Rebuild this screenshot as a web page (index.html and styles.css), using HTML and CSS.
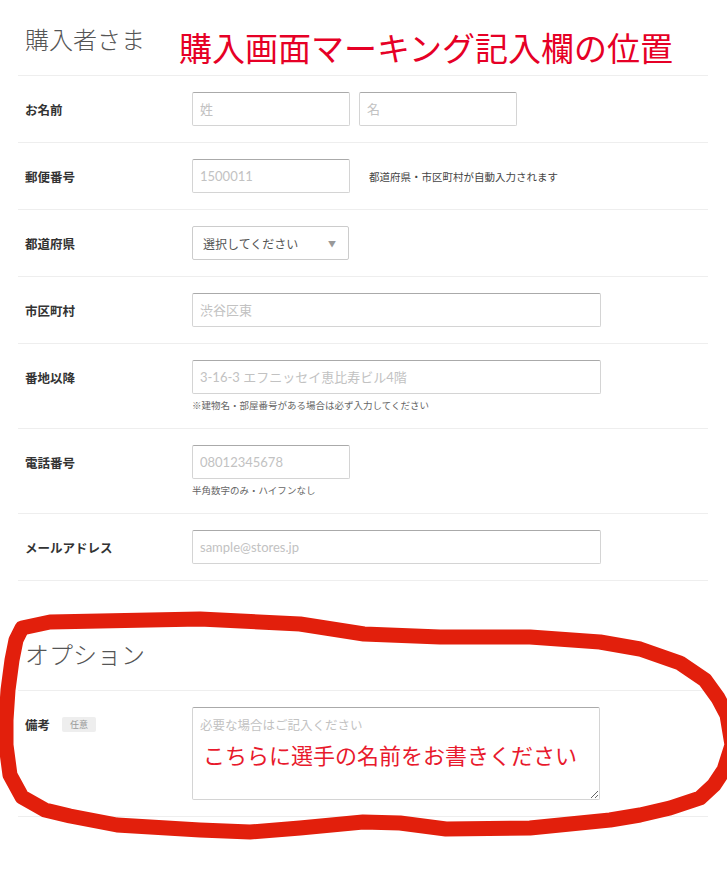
FILE: index.html
```html
<!DOCTYPE html>
<html lang="ja">
<head>
    <meta charset="UTF-8">
    <meta name="viewport" content="width=device-width, initial-scale=1.0">
    <title>購入者さま</title>
    <link rel="stylesheet" href="styles.css">
</head>
<body>
    <div class="form">
        <!-- 購入者情報 -->
        <section class="section">
            <div class="section-head">
                <h2>購入者さま</h2>
                <span class="mark-title">購入画面マーキング記入欄の位置</span>
            </div>

            <div class="row">
                <label class="label">お名前</label>
                <div class="field">
                    <div class="inline">
                        <input class="input short" type="text" placeholder="姓">
                        <input class="input short" type="text" placeholder="名">
                    </div>
                </div>
            </div>

            <div class="row">
                <label class="label">郵便番号</label>
                <div class="field">
                    <div class="inline">
                        <input class="input short" type="text" placeholder="1500011">
                        <span class="hint">都道府県・市区町村が自動入力されます</span>
                    </div>
                </div>
            </div>

            <div class="row">
                <label class="label">都道府県</label>
                <div class="field">
                    <div class="select">
                        <span>選択してください</span>
                        <span class="arrow">▼</span>
                    </div>
                </div>
            </div>

            <div class="row">
                <label class="label">市区町村</label>
                <div class="field">
                    <input class="input wide" type="text" placeholder="渋谷区東">
                </div>
            </div>

            <div class="row">
                <label class="label">番地以降</label>
                <div class="field">
                    <input class="input wide" type="text" placeholder="3-16-3 エフニッセイ恵比寿ビル4階">
                    <p class="note">※建物名・部屋番号がある場合は必ず入力してください</p>
                </div>
            </div>

            <div class="row">
                <label class="label">電話番号</label>
                <div class="field">
                    <input class="input short" type="text" placeholder="08012345678">
                    <p class="note">半角数字のみ・ハイフンなし</p>
                </div>
            </div>

            <div class="row">
                <label class="label">メールアドレス</label>
                <div class="field">
                    <input class="input wide" type="text" placeholder="sample@stores.jp">
                </div>
            </div>
        </section>

        <!-- オプション -->
        <section class="section option">
            <div class="section-head">
                <h2>オプション</h2>
            </div>

            <div class="row">
                <label class="label">備考<span class="badge">任意</span></label>
                <div class="field">
                    <div class="memo">
                        <textarea class="textarea" placeholder="必要な場合はご記入ください"></textarea>
                        <span class="memo-mark">こちらに選手の名前をお書きください</span>
                    </div>
                </div>
            </div>
        </section>
    </div>

    <!-- 手書きの赤丸 -->
    <svg class="circle" width="727" height="873" viewBox="0 0 727 873">
        <path d="M22 628 L50 622 L100 621 L200 619 L300 624 L364 634 L440 637 L530 637 L600 642 L640 649 L680 663 L705 680 L718 698 L727 715 L732 745 L724 770 L714 785 L700 798 L670 808 L640 815 L610 820 L530 828 L446 829 L400 823 L363 822 L300 828 L250 832 L200 830 L117 825 L70 816 L45 810 L22 797 L10 775 L6 745 L6 720 L8 690 L12 660 L16 640 Z"
              fill="none" stroke="#e21f0c" stroke-width="15" stroke-linejoin="round"/>
    </svg>
</body>
</html>
```

FILE: styles.css
```css
html, body {
    margin: 0;
    padding: 0;
    background: #fff;
    overflow: hidden;
}
body {
    position: relative;
    min-height: 873px;
    font-family: "Lato", "Noto Sans CJK JP", sans-serif;
    color: #333;
}
.form {
    width: 690px;
    margin-left: 18px;
}
.option {
    margin-top: 34px;
}
.section-head {
    display: flex;
    align-items: flex-start;
    box-sizing: border-box;
    height: 76px;
    padding: 22px 0 0 7px;
    border-bottom: 1px solid #eee;
}
.section-head h2 {
    margin: 0;
    font-size: 24px;
    line-height: 36px;
    font-weight: 300;
    color: #555;
}
.mark-title {
    margin: 8px 0 0 34px;
    font-size: 33px;
    line-height: 36px;
    color: #e60026;
    white-space: nowrap;
}
.row {
    display: grid;
    grid-template-columns: 167px 1fr;
    padding: 16px 0 16px 7px;
    border-bottom: 1px solid #eee;
}
.label {
    display: flex;
    align-items: center;
    align-self: start;
    height: 34px;
    font-size: 12.5px;
    font-weight: bold;
    color: #333;
}
.badge {
    margin-left: 12px;
    padding: 0 8px;
    height: 15px;
    line-height: 15px;
    font-size: 9px;
    font-weight: normal;
    color: #999;
    background: #eee;
    border-radius: 2px;
}
.field {
    display: flex;
    flex-direction: column;
    align-items: flex-start;
}
.inline {
    display: flex;
    align-items: center;
    gap: 9px;
}
.input {
    box-sizing: border-box;
    height: 34px;
    padding: 0 7px;
    border: 1px solid #d4d4d4;
    border-top-color: #aaa;
    border-radius: 2px;
    font-family: inherit;
    font-size: 13px;
    color: #333;
    outline: none;
}
.input::placeholder,
.textarea::placeholder {
    color: #c2c2c2;
}
.short {
    width: 158px;
}
.wide {
    width: 409px;
}
.hint {
    margin-left: 10px;
    font-size: 10.5px;
    color: #444;
}
.note {
    margin: 6px 0 0;
    line-height: 12px;
    font-size: 9.5px;
    color: #666;
}
.select {
    box-sizing: border-box;
    display: flex;
    align-items: center;
    justify-content: space-between;
    width: 157px;
    height: 34px;
    padding: 0 12px 0 10px;
    border: 1px solid #ccc;
    border-radius: 2px;
    font-size: 12px;
    color: #555;
}
.arrow {
    font-size: 8px;
    color: #999;
}
.memo {
    position: relative;
}
.textarea {
    box-sizing: border-box;
    display: block;
    width: 408px;
    height: 93px;
    margin: 0;
    padding: 8px 7px;
    border: 1px solid #d4d4d4;
    border-top-color: #aaa;
    border-radius: 2px;
    font-family: inherit;
    font-size: 12.5px;
    line-height: 20px;
    outline: none;
}
.memo-mark {
    position: absolute;
    left: 11px;
    top: 36px;
    font-size: 22px;
    line-height: 26px;
    color: #e8192c;
    white-space: nowrap;
}
.circle {
    position: absolute;
    top: 0;
    left: 0;
    pointer-events: none;
}
```
